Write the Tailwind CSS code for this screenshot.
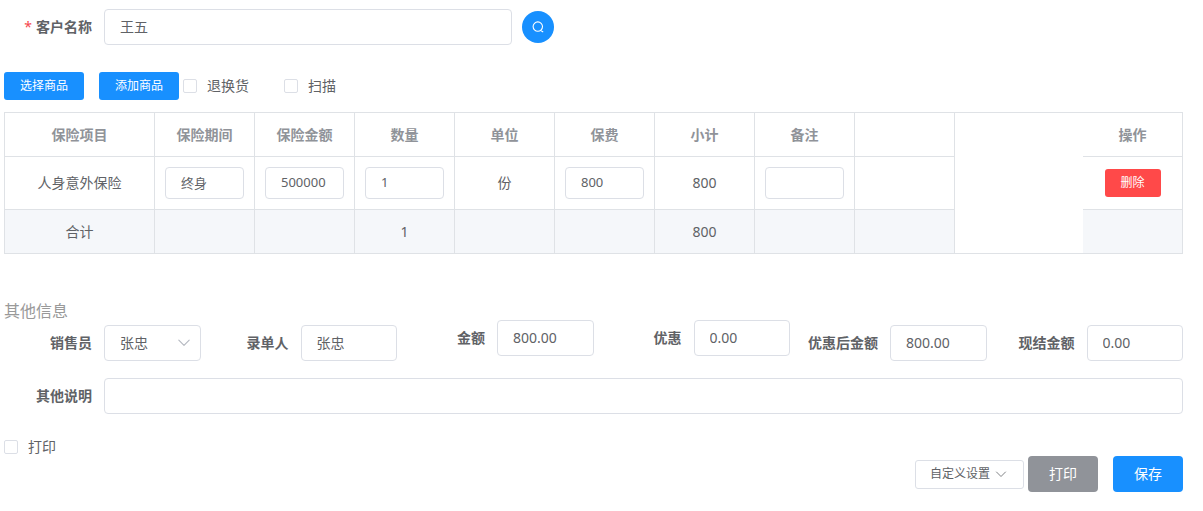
<!DOCTYPE html>
<html lang="zh-CN">
<head>
<meta charset="utf-8">
<meta name="viewport" content="width=device-width, initial-scale=1">
<title>保单录入</title>
<script src="https://cdn.jsdelivr.net/npm/@tailwindcss/browser@4"></script>
</head>
<body class="bg-white font-['Noto_Sans','Noto_Sans_CJK_SC',sans-serif] text-sm text-[#606266]">
<form class="flex flex-col pt-[9px] pr-5 pb-4 pl-1">

  <div class="flex items-center">
    <label for="customer" class="w-[100px] shrink-0 pr-3 text-right font-bold"><span class="mr-1 font-normal text-[#f5464c]">*</span>客户名称</label>
    <input id="customer" type="text" value="王五" class="h-9 w-[408px] rounded border border-[#dcdfe6] bg-white px-[15px] pb-0.5">
    <button type="button" aria-label="搜索" class="ml-[10px] flex size-8 items-center justify-center rounded-full bg-[#1890ff] text-white">
      <svg class="size-3" viewBox="0 0 12 12" fill="none" stroke="currentColor" stroke-width="1.1" stroke-linecap="round"><circle cx="5.8" cy="5.6" r="4.7"/><path d="M8.8 9.6l2 1.2"/></svg>
    </button>
  </div>

  <div class="mt-[27px] flex items-center">
    <button type="button" class="h-7 w-20 rounded-[3px] bg-[#1890ff] text-xs text-white">选择商品</button>
    <button type="button" class="ml-[15px] h-7 w-20 rounded-[3px] bg-[#1890ff] text-xs text-white">添加商品</button>
    <label class="ml-1 flex items-center gap-[10px]"><input type="checkbox" class="size-[14px] appearance-none rounded-xs border border-[#dcdfe6] bg-white checked:bg-[#1890ff]">退换货</label>
    <label class="ml-[35px] flex items-center gap-[10px]"><input type="checkbox" class="size-[14px] appearance-none rounded-xs border border-[#dcdfe6] bg-white checked:bg-[#1890ff]">扫描</label>
  </div>

  <div class="mt-3 border border-[#dfe2e6]">
    <table class="w-full table-fixed border-separate border-spacing-0 text-center">
      <colgroup>
        <col class="w-[150px]"><col class="w-[100px]"><col class="w-[100px]"><col class="w-[100px]"><col class="w-[100px]"><col class="w-[100px]"><col class="w-[100px]"><col class="w-[100px]"><col class="w-[100px]"><col><col class="w-[99px]">
      </colgroup>
      <thead class="text-[#909399]">
        <tr class="h-11">
          <th class="border-r border-b border-[#dfe2e6]">保险项目</th>
          <th class="border-r border-b border-[#dfe2e6]">保险期间</th>
          <th class="border-r border-b border-[#dfe2e6]">保险金额</th>
          <th class="border-r border-b border-[#dfe2e6]">数量</th>
          <th class="border-r border-b border-[#dfe2e6]">单位</th>
          <th class="border-r border-b border-[#dfe2e6]">保费</th>
          <th class="border-r border-b border-[#dfe2e6]">小计</th>
          <th class="border-r border-b border-[#dfe2e6]">备注</th>
          <th class="border-r border-b border-[#dfe2e6]"></th>
          <th></th>
          <th class="border-b border-[#dfe2e6]">操作</th>
        </tr>
      </thead>
      <tbody>
        <tr class="h-[53px]">
          <td class="border-r border-b border-[#dfe2e6]">人身意外保险</td>
          <td class="border-r border-b border-[#dfe2e6] px-[10px]"><input aria-label="保险期间" type="text" value="终身" class="block h-8 w-full rounded border border-[#dcdfe6] bg-white px-[15px] pb-0.5 text-[13px]"></td>
          <td class="border-r border-b border-[#dfe2e6] px-[10px]"><input aria-label="保险金额" type="text" value="500000" class="block h-8 w-full rounded border border-[#dcdfe6] bg-white px-[15px] pb-0.5 text-[13px]"></td>
          <td class="border-r border-b border-[#dfe2e6] px-[10px]"><input aria-label="数量" type="text" value="1" class="block h-8 w-full rounded border border-[#dcdfe6] bg-white px-[15px] pb-0.5 text-[13px]"></td>
          <td class="border-r border-b border-[#dfe2e6]">份</td>
          <td class="border-r border-b border-[#dfe2e6] px-[10px]"><input aria-label="保费" type="text" value="800" class="block h-8 w-full rounded border border-[#dcdfe6] bg-white px-[15px] pb-0.5 text-[13px]"></td>
          <td class="border-r border-b border-[#dfe2e6]">800</td>
          <td class="border-r border-b border-[#dfe2e6] px-[10px]"><input aria-label="备注" type="text" class="block h-8 w-full rounded border border-[#dcdfe6] bg-white px-[15px] pb-0.5 text-[13px]"></td>
          <td class="border-r border-b border-[#dfe2e6]"></td>
          <td></td>
          <td class="border-b border-[#dfe2e6]"><button type="button" class="h-7 w-14 rounded-[3px] bg-[#ff4949] text-xs text-white">删除</button></td>
        </tr>
      </tbody>
      <tfoot>
        <tr class="h-[43px]">
          <td class="border-r border-[#dfe2e6] bg-[#f5f7fa]">合计</td>
          <td class="border-r border-[#dfe2e6] bg-[#f5f7fa]"></td>
          <td class="border-r border-[#dfe2e6] bg-[#f5f7fa]"></td>
          <td class="border-r border-[#dfe2e6] bg-[#f5f7fa]">1</td>
          <td class="border-r border-[#dfe2e6] bg-[#f5f7fa]"></td>
          <td class="border-r border-[#dfe2e6] bg-[#f5f7fa]"></td>
          <td class="border-r border-[#dfe2e6] bg-[#f5f7fa]">800</td>
          <td class="border-r border-[#dfe2e6] bg-[#f5f7fa]"></td>
          <td class="border-r border-[#dfe2e6] bg-[#f5f7fa]"></td>
          <td></td>
          <td class="bg-[#f5f7fa]"></td>
        </tr>
      </tfoot>
    </table>
  </div>

  <h2 class="mt-12 text-base leading-[18px] text-[#999999]">其他信息</h2>
  <div class="grid grid-cols-6 items-start">
    <div class="mt-[5px] flex items-center">
      <label for="seller" class="w-[100px] shrink-0 pr-3 text-right font-bold">销售员</label>
      <div class="relative min-w-0 flex-1">
        <select id="seller" class="block h-9 w-full appearance-none rounded border border-[#dcdfe6] bg-white px-[15px]"><option>张忠</option></select>
        <svg class="pointer-events-none absolute top-3 right-[11px] size-3" viewBox="0 0 12 12" fill="none" stroke="#b4b8c0" stroke-width="1.1" stroke-linecap="round" stroke-linejoin="round"><path d="M.8 3.2l5.2 5.2 5.2-5.2"/></svg>
      </div>
    </div>
    <div class="mt-[5px] flex items-center">
      <label for="clerk" class="w-[100px] shrink-0 pr-3 text-right font-bold">录单人</label>
      <input id="clerk" type="text" value="张忠" class="h-9 min-w-0 flex-1 rounded border border-[#dcdfe6] bg-white px-[15px] pb-0.5">
    </div>
    <div class="flex items-center">
      <label for="amount" class="w-[100px] shrink-0 pr-3 text-right font-bold">金额</label>
      <input id="amount" type="text" value="800.00" class="h-9 min-w-0 flex-1 rounded border border-[#dcdfe6] bg-white px-[15px] pb-0.5">
    </div>
    <div class="flex items-center">
      <label for="discount" class="w-[100px] shrink-0 pr-3 text-right font-bold">优惠</label>
      <input id="discount" type="text" value="0.00" class="h-9 min-w-0 flex-1 rounded border border-[#dcdfe6] bg-white px-[15px] pb-0.5">
    </div>
    <div class="mt-[5px] flex items-center">
      <label for="net" class="w-[100px] shrink-0 pr-3 text-right font-bold">优惠后金额</label>
      <input id="net" type="text" value="800.00" class="h-9 min-w-0 flex-1 rounded border border-[#dcdfe6] bg-white px-[15px] pb-0.5">
    </div>
    <div class="mt-[5px] flex items-center">
      <label for="cash" class="w-[100px] shrink-0 pr-3 text-right font-bold">现结金额</label>
      <input id="cash" type="text" value="0.00" class="h-9 min-w-0 flex-1 rounded border border-[#dcdfe6] bg-white px-[15px] pb-0.5">
    </div>
  </div>

  <div class="mt-[17px] flex items-center">
    <label for="remark" class="w-[100px] shrink-0 pr-3 text-right font-bold">其他说明</label>
    <input id="remark" type="text" class="h-9 min-w-0 flex-1 rounded border border-[#dcdfe6] bg-white px-[15px] pb-0.5">
  </div>

  <label class="mt-6 flex items-center gap-[10px] self-start leading-[18px]"><input type="checkbox" class="size-[14px] appearance-none rounded-xs border border-[#dcdfe6] bg-white checked:bg-[#1890ff]">打印</label>

  <div class="flex items-center justify-end">
    <button type="button" class="flex h-[29px] items-center gap-[5px] rounded-[3px] border border-[#dcdfe6] bg-white pr-4 pl-[14px] text-xs">自定义设置
      <svg class="size-3" viewBox="0 0 12 12" fill="none" stroke="currentColor" stroke-width="0.8" stroke-linecap="round" stroke-linejoin="round"><path d="M1.5 4L6 8.5 10.5 4"/></svg>
    </button>
    <button type="button" class="ml-1 h-9 w-[70px] rounded bg-[#909399] text-white">打印</button>
    <button type="submit" class="ml-[15px] h-9 w-[70px] rounded bg-[#1890ff] text-white">保存</button>
  </div>
</form>
</body>
</html>
